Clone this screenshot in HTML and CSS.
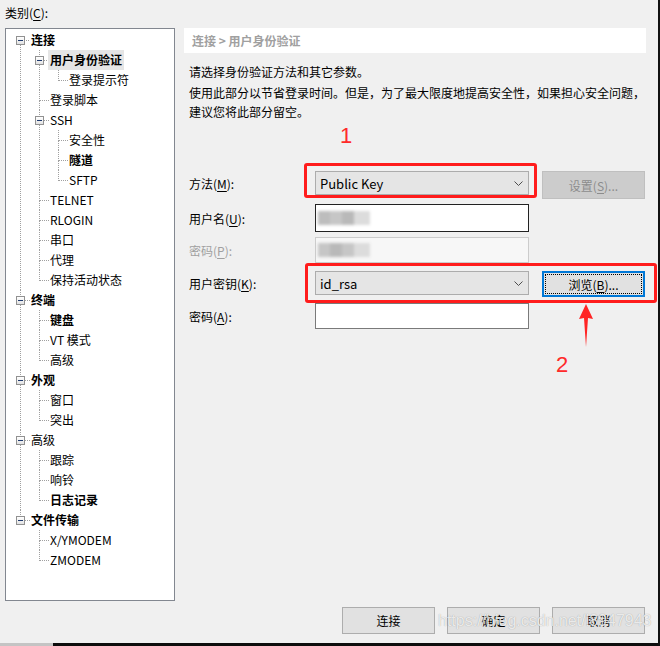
FILE: index.html
```html
<!DOCTYPE html>
<html lang="zh-CN">
<head>
    <meta charset="UTF-8">
    <title>会话选项 - 用户身份验证</title>
    <link rel="stylesheet" href="styles.css">
</head>
<body>
    <div class="dialog">
        <div class="cat-label">类别(<u>C</u>):</div>

        <div class="main">
            <!-- category tree -->
            <div class="tree-box">
                <ul class="tree">
                    <li>
                        <div class="row"><span class="exp"></span><span class="txt b">连接</span></div>
                        <ul>
                            <li>
                                <div class="row"><span class="exp"></span><span class="txt b sel">用户身份验证</span></div>
                                <ul>
                                    <li><div class="row"><span class="txt">登录提示符</span></div></li>
                                </ul>
                            </li>
                            <li><div class="row"><span class="txt">登录脚本</span></div></li>
                            <li>
                                <div class="row"><span class="exp"></span><span class="txt">SSH</span></div>
                                <ul>
                                    <li><div class="row"><span class="txt">安全性</span></div></li>
                                    <li><div class="row"><span class="txt b">隧道</span></div></li>
                                    <li><div class="row"><span class="txt">SFTP</span></div></li>
                                </ul>
                            </li>
                            <li><div class="row"><span class="txt">TELNET</span></div></li>
                            <li><div class="row"><span class="txt">RLOGIN</span></div></li>
                            <li><div class="row"><span class="txt">串口</span></div></li>
                            <li><div class="row"><span class="txt">代理</span></div></li>
                            <li><div class="row"><span class="txt">保持活动状态</span></div></li>
                        </ul>
                    </li>
                    <li>
                        <div class="row"><span class="exp"></span><span class="txt b">终端</span></div>
                        <ul>
                            <li><div class="row"><span class="txt b">键盘</span></div></li>
                            <li><div class="row"><span class="txt">VT 模式</span></div></li>
                            <li><div class="row"><span class="txt">高级</span></div></li>
                        </ul>
                    </li>
                    <li>
                        <div class="row"><span class="exp"></span><span class="txt b">外观</span></div>
                        <ul>
                            <li><div class="row"><span class="txt">窗口</span></div></li>
                            <li><div class="row"><span class="txt">突出</span></div></li>
                        </ul>
                    </li>
                    <li>
                        <div class="row"><span class="exp"></span><span class="txt">高级</span></div>
                        <ul>
                            <li><div class="row"><span class="txt">跟踪</span></div></li>
                            <li><div class="row"><span class="txt">响铃</span></div></li>
                            <li><div class="row"><span class="txt b">日志记录</span></div></li>
                        </ul>
                    </li>
                    <li>
                        <div class="row"><span class="exp"></span><span class="txt b">文件传输</span></div>
                        <ul>
                            <li><div class="row"><span class="txt">X/YMODEM</span></div></li>
                            <li><div class="row"><span class="txt">ZMODEM</span></div></li>
                        </ul>
                    </li>
                </ul>
            </div>

            <!-- settings page -->
            <div class="panel">
                <div class="crumb">连接 &gt; 用户身份验证</div>
                <p class="intro">请选择身份验证方法和其它参数。</p>
                <p class="note">使用此部分以节省登录时间。但是，为了最大限度地提高安全性，如果担心安全问题，<br>建议您将此部分留空。</p>

                <div class="form">
                    <div class="frow r-method">
                        <label class="lbl">方法(<u>M</u>):</label>
                        <div class="combo">
                            <span>Public Key</span>
                            <svg class="chev" width="9" height="5" viewBox="0 0 9 5"><polyline points="0.5,0.5 4.5,4.5 8.5,0.5" fill="none" stroke="#4d4d4d" stroke-width="1"/></svg>
                        </div>
                        <button class="btn side disabled">设置(<u>S</u>)...</button>
                    </div>
                    <div class="frow r-user">
                        <label class="lbl">用户名(<u>U</u>):</label>
                        <div class="field focus">
                            <div class="mosaic"><i class="m1"></i><i class="m2"></i><i class="m3"></i><i class="m4"></i></div>
                        </div>
                    </div>
                    <div class="frow r-pass">
                        <label class="lbl off">密码(<u>P</u>):</label>
                        <div class="field off">
                            <div class="mosaic"><i class="m2"></i><i class="m3"></i><i class="m2"></i><i class="m4"></i></div>
                        </div>
                    </div>
                    <div class="frow r-key">
                        <label class="lbl">用户密钥(<u>K</u>):</label>
                        <div class="combo">
                            <span>id_rsa</span>
                            <svg class="chev" width="9" height="5" viewBox="0 0 9 5"><polyline points="0.5,0.5 4.5,4.5 8.5,0.5" fill="none" stroke="#4d4d4d" stroke-width="1"/></svg>
                        </div>
                        <button class="btn side default"><span class="focus-ring">浏览(<u>B</u>)...</span></button>
                    </div>
                    <div class="frow r-phrase">
                        <label class="lbl">密码(<u>A</u>):</label>
                        <div class="field plain"></div>
                    </div>
                </div>

                <div class="actions">
                    <button class="btn wide">连接</button>
                    <button class="btn wide">确定</button>
                    <button class="btn wide">取消</button>
                </div>
            </div>
        </div>

        <!-- red annotations drawn over the screenshot -->
        <div class="marks">
            <div class="box box1"></div>
            <div class="box box2"></div>
            <span class="num num1">1</span>
            <span class="num num2">2</span>
            <svg class="arrow" width="18" height="46" viewBox="0 0 18 46">
                <polygon points="9,1 16,16 11,15 9,44 7,15 2,16" fill="#ff2424"/>
            </svg>
            <span class="watermark">https://blog.csdn.net/l8947943</span>
        </div>

        <div class="edge"></div>
    </div>
</body>
</html>
```

FILE: styles.css
```css
/* Global */
body {
    margin: 0;
    padding: 0;
    font-family: "Noto Sans CJK SC", "Noto Sans", sans-serif;
    font-size: 12px;
    color: #000;
}

.dialog {
    position: relative;
    width: 658px;
    height: 646px;
    background-color: #f0f0f0;
    border-right: 2px solid #111;
}

u {
    text-decoration: underline;
    text-underline-offset: 2px;
}

.cat-label {
    height: 28px;
    line-height: 26px;
    padding-left: 5px;
}

.main {
    display: flex;
    align-items: flex-start;
    height: 615px;
}

/* Category tree */
.tree-box {
    width: 170px;
    height: 573px;
    box-sizing: border-box;
    margin-left: 5px;
    padding-top: 1px;
    background-color: #fff;
    border: 1px solid #828790;
}

.tree, .tree ul {
    list-style: none;
    margin: 0;
    padding: 0;
}

.tree ul {
    margin-left: 19px;
}

.tree li {
    position: relative;
}

.tree li::before {
    content: "";
    position: absolute;
    left: 14px;
    top: 0;
    width: 9px;
    height: 10px;
    border-left: 1px dotted #a0a0a0;
    border-bottom: 1px dotted #a0a0a0;
}

.tree > li:first-child::before {
    border-left: none;
}

.tree li::after {
    content: "";
    position: absolute;
    left: 14px;
    top: 10px;
    bottom: 0;
    border-left: 1px dotted #a0a0a0;
}

.tree li:last-child::after {
    display: none;
}

.row {
    position: relative;
    z-index: 1;
    display: flex;
    align-items: center;
    height: 20px;
    padding-left: 25px;
}

.exp {
    display: flex;
    align-items: center;
    justify-content: center;
    width: 9px;
    height: 9px;
    box-sizing: border-box;
    margin-left: -15px;
    margin-right: 6px;
    border: 1px solid #919191;
    background: linear-gradient(#ffffff, #e2e2e2);
}

.exp::before {
    content: "";
    width: 5px;
    height: 1px;
    background-color: #1e3a6e;
}

.txt {
    line-height: 20px;
    white-space: nowrap;
}

.txt.b {
    font-weight: bold;
}

.txt.sel {
    background-color: #e5e5e5;
    padding: 0 2px;
    margin-left: -2px;
}

/* Right page */
.panel {
    display: flex;
    flex-direction: column;
    width: 462px;
    height: 606px;
    margin-left: 9px;
}

.crumb {
    height: 25px;
    line-height: 25px;
    padding-left: 8px;
    background-color: #fff;
    color: #a0a0a0;
    font-weight: bold;
}

.intro, .note {
    margin: 0;
    padding-left: 5px;
    line-height: 19px;
    white-space: nowrap;
}

.intro {
    margin-top: 9px;
}

.note {
    margin-top: 2px;
}

.form {
    margin-top: 50px;
    padding-left: 5px;
}

.frow {
    display: flex;
    align-items: center;
}

.r-method { height: 24px; }
.r-user { height: 28px; margin-top: 9px; }
.r-pass { height: 26px; margin-top: 5px; }
.r-key { height: 24px; margin-top: 8px; }
.r-phrase { height: 26px; margin-top: 8px; }

.lbl {
    width: 126px;
    flex-shrink: 0;
}

.lbl.off {
    color: #a0a0a0;
}

.combo {
    display: flex;
    align-items: center;
    justify-content: space-between;
    width: 214px;
    height: 24px;
    box-sizing: border-box;
    padding: 0 4px 0 4px;
    background-color: #e5e5e5;
    border: 1px solid #acacac;
    font-size: 13px;
}

.chev {
    margin-right: 1px;
}

.field {
    width: 214px;
    height: 100%;
    box-sizing: border-box;
    background-color: #fff;
    display: flex;
    align-items: center;
}

.field.focus {
    border: 1px solid #222;
}

.field.off {
    border: 1px solid #cccccc;
    background-color: #f7f7f7;
}

.field.plain {
    border: 1px solid #7a7a7a;
}

/* blurred-out account data */
.mosaic {
    display: flex;
    margin-left: 2px;
    filter: blur(1.5px);
}

.mosaic i {
    width: 12px;
    height: 14px;
}

.mosaic .m1 { background-color: #bdbdbd; }
.mosaic .m2 { background-color: #c6c6c6; }
.mosaic .m3 { background-color: #b9b9b9; }
.mosaic .m4 { background-color: #dcdcdc; width: 16px; }

/* Buttons */
.btn {
    font-family: inherit;
    font-size: 12px;
    color: #000;
    background-color: #e1e1e1;
    border: 1px solid #adadad;
    padding: 0;
    cursor: default;
}

.btn.side {
    align-self: flex-start;
    width: 103px;
    margin-left: 13px;
}

.btn.disabled {
    height: 28px;
    background-color: #cccccc;
    border-color: #bfbfbf;
    color: #8c8c8c;
}

.btn.default {
    height: 26px;
    border: 2px solid #0078d7;
    padding: 1px;
}

.focus-ring {
    display: flex;
    align-items: center;
    justify-content: center;
    height: 100%;
    box-sizing: border-box;
    border: 1px dotted #000;
}

.actions {
    display: flex;
    justify-content: flex-end;
    gap: 12px;
    margin-top: auto;
    margin-right: 1px;
}

.btn.wide {
    width: 93px;
    height: 27px;
}

/* Annotations */
.marks {
    position: absolute;
    left: 0;
    top: 0;
    width: 658px;
    height: 646px;
    pointer-events: none;
}

.box {
    position: absolute;
    box-sizing: border-box;
    border: 3px solid #ff1c1c;
    border-radius: 3px;
}

.box1 {
    left: 304px;
    top: 163px;
    width: 233px;
    height: 35px;
}

.box2 {
    left: 305px;
    top: 263px;
    width: 352px;
    height: 40px;
}

.num {
    position: absolute;
    font-family: "Liberation Sans", Arial, sans-serif;
    font-size: 22px;
    line-height: 22px;
    color: #ff2a2a;
}

.num1 {
    left: 340px;
    top: 125px;
}

.num2 {
    left: 556px;
    top: 354px;
}

.arrow {
    position: absolute;
    left: 577px;
    top: 303px;
}

.watermark {
    position: absolute;
    left: 438px;
    top: 611px;
    font-family: "Liberation Sans", Arial, sans-serif;
    font-size: 16px;
    line-height: 20px;
    color: rgba(255, 255, 255, 0.8);
    text-shadow: 0 0 1px rgba(0, 0, 0, 0.35);
    white-space: nowrap;
}

.edge {
    position: absolute;
    left: 0;
    bottom: 0;
    width: 658px;
    height: 3px;
    background: linear-gradient(to right, #c4c4c4 0, #c4c4c4 53px, #0d0d0d 53px);
}
```
